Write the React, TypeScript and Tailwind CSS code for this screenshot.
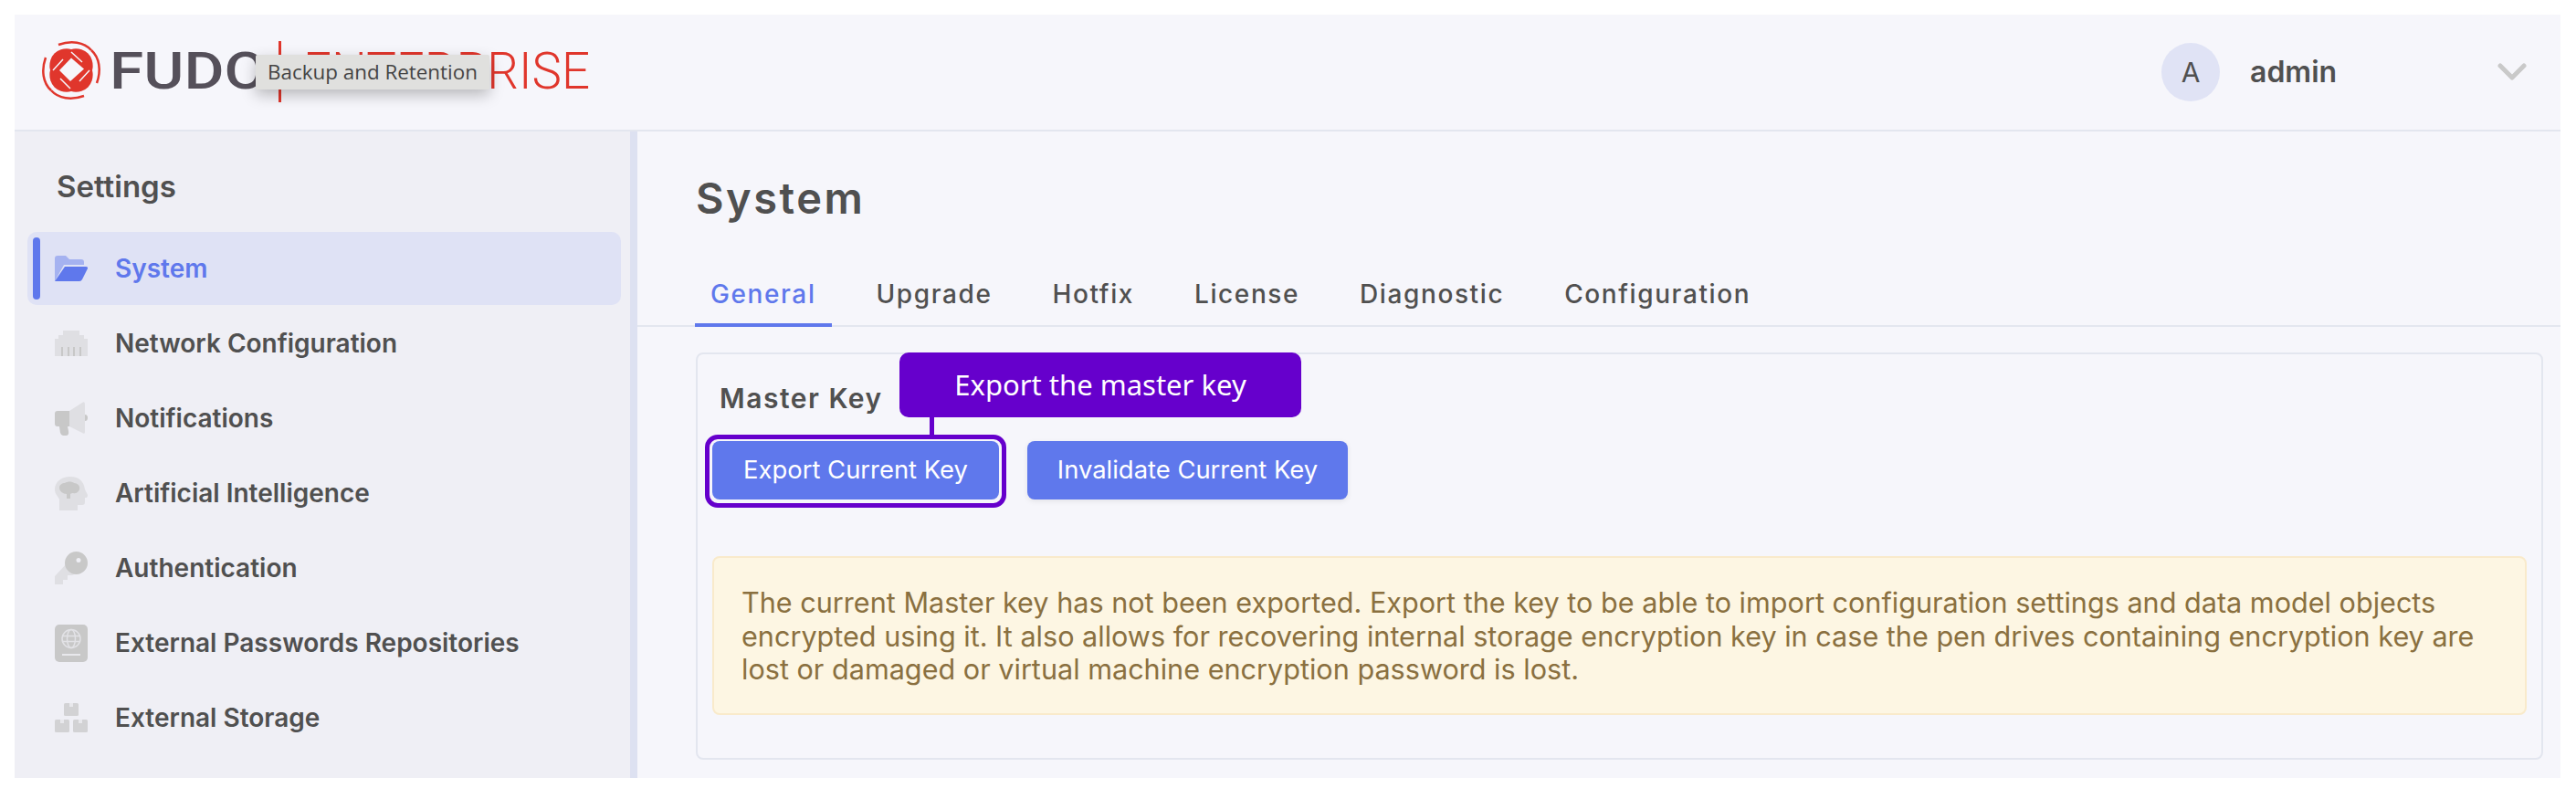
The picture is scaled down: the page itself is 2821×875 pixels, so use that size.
const navItems = [
  { label: 'System', icon: FolderIcon, active: true },
  { label: 'Network Configuration', icon: NetworkIcon },
  { label: 'Notifications', icon: MegaphoneIcon },
  { label: 'Artificial Intelligence', icon: BrainIcon },
  { label: 'Authentication', icon: KeyIcon },
  { label: 'External Passwords Repositories', icon: PassportIcon },
  { label: 'External Storage', icon: BoxesIcon },
]

const tabs = ['General', 'Upgrade', 'Hotfix', 'License', 'Diagnostic', 'Configuration']

function FolderIcon() {
  return (
    <svg viewBox="0 0 36 28" className="h-[28px] w-[36px]">
      <path d="M0 3a3 3 0 0 1 3-3h9l4 4h13a3 3 0 0 1 3 3v3H10L0 28z" fill="#5f78ec" opacity="0.45" />
      <path d="M11 12h23q2.500 0 2 2l-6 12q-1 2-3 2H0z" fill="#5f78ec" />
    </svg>
  )
}

function NetworkIcon() {
  return (
    <svg viewBox="0 0 36 28" className="h-[28px] w-[36px]">
      <path d="M9 0h18v5h5v4h4v19H0V9h4V5h5z" fill="#dfdfe3" />
      <path d="M7 18h2v10H7zM14 18h2v10h-2zM20 18h2v10h-2zM27 18h2v10h-2z" fill="#c8c8c8" />
    </svg>
  )
}

function MegaphoneIcon() {
  return (
    <svg viewBox="0 0 36 37" className="h-[37px] w-[36px]">
      <path d="M16 10 30 1q3-2 3 2v30q0 3-3 1L16 27z" fill="#dfdfe3" />
      <path d="M33 14q3 0 3 3.500T33 21z" fill="#c8c8c8" />
      <path d="M3 10h13v17h-2l1 5q1 5-3 5H9q-2 0-3-3l-1-7H3q-3 0-3-3V13q0-3 3-3z" fill="#c8c8c8" />
    </svg>
  )
}

function BrainIcon() {
  return (
    <svg viewBox="0 0 36 37" className="h-[37px] w-[36px]">
      <path d="M17 0C7 0 0 6 0 14c0 5 4 8 5 11v12h20v-6h5q3 0 3-3v-5h2q1-1 1-3l-3-6C32 6 27 0 17 0z" fill="#dfdfe3" />
      <path d="M5 12c0-3 3-5 6-5 3-2 8-2 10 0 4 0 7 3 6 7-1 3-4 5-7 4-1 0-2 0-3 1v5h-4v-5c-4 0-8-3-8-7z" fill="#c8c8c8" />
    </svg>
  )
}

function KeyIcon() {
  return (
    <svg viewBox="0 0 36 36" className="h-[36px] w-[36px]">
      <path d="M15 11 0 27v9h9v-5h5v-5h5l4-2z" fill="#dfdfe3" />
      <path fillRule="evenodd" d="M23.500 0a12.500 12.500 0 1 1 0 25 12.500 12.500 0 0 1 0-25zm2.500 7a2.500 2.500 0 1 0 0 5 2.500 2.500 0 0 0 0-5z" fill="#c8c8c8" />
    </svg>
  )
}

function PassportIcon() {
  return (
    <svg viewBox="0 0 36 41" className="h-[41px] w-[36px]">
      <rect width="36" height="41" rx="5" fill="#c8c8c8" />
      <g fill="none" stroke="#e2e2e6" strokeWidth="1.5">
        <circle cx="18" cy="15.500" r="10" />
        <ellipse cx="18" cy="15.500" rx="4.500" ry="10" />
        <path d="M8.500 12.500h19M8.500 18.500h19" />
      </g>
      <rect x="8" y="32" width="20" height="2" fill="#e8e8ec" />
    </svg>
  )
}

function BoxesIcon() {
  return (
    <svg viewBox="0 0 36 32" className="h-[32px] w-[36px]">
      <rect x="10" width="16" height="14" rx="1.500" fill="#d2d2d4" />
      <rect y="18" width="16" height="14" rx="1.500" fill="#d2d2d4" />
      <rect x="20" y="18" width="16" height="14" rx="1.500" fill="#d2d2d4" />
      <path d="M16 0h4v4h-4zM6 18h4v4H6zM26 18h4v4h-4z" fill="#e8e8ec" />
    </svg>
  )
}

function FudoLogo() {
  return (
    <svg viewBox="0 -1 610 70" className="h-[70px] w-[610px]">
      <g fill="#e0362c">
        <ellipse cx="32" cy="32" rx="26" ry="21" transform="rotate(-45 32 32)" />
        <ellipse cx="32" cy="32" rx="26" ry="21" transform="rotate(45 32 32)" />
      </g>
      <g fill="none" stroke="#e0362c" strokeWidth="2.500">
        <path d="M4 18C-1 32 1 46 10 54" />
        <path d="M60 46C65 32 63 18 54 10" />
        <path d="M18 4C32-1 46 1 54 10" />
        <path d="M46 60C32 65 18 63 10 54" />
      </g>
      <path d="M32 18.500 46 30.500 31 44 19 32z" fill="#f6f6fb" />
      <path d="M32 12 44 23 M12 32 23 20 M52 32 41 44 M31 52 20 41" fill="none" stroke="#f6f6fb" strokeWidth="1.500" />
      <text x="74" y="52" textLength="172" lengthAdjust="spacingAndGlyphs" fontFamily="Roboto, sans-serif" fontWeight="500" fontSize="56" fill="#55505a">FUDO</text>
      <rect x="259" y="0" width="3" height="67" fill="#e0362c" />
      <text x="286" y="52" textLength="314" lengthAdjust="spacingAndGlyphs" fontFamily="Roboto, sans-serif" fontWeight="300" fontSize="56" fill="#e0362c">ENTERPRISE</text>
    </svg>
  )
}

export default function App() {
  return (
    <div className="h-[875px] w-full overflow-hidden bg-white pt-4 pr-[17px] pl-4 font-['Inter',sans-serif] text-[#505050]">
      <div className="flex h-[836px] flex-col bg-[#f6f6fb]">
        <header className="relative flex h-[128px] shrink-0 items-center border-b-2 border-[#e3e6ef] pl-[30px]">
          <FudoLogo />
          <div className="absolute top-[44px] left-[264px] flex h-[38px] w-[256px] items-center justify-center rounded-[2px] bg-[#e0e0de] font-['Open_Sans',sans-serif] text-[22.400px] text-[#444] shadow-[0_6px_16px_rgba(0,0,0,0.25)]">
            Backup and Retention
          </div>
          <div className="ml-auto flex items-center">
            <div className="flex h-16 w-16 items-center justify-center rounded-full bg-[#e0e3f5] text-[30px]">A</div>
            <span className="ml-[33px] w-[271px] text-[32px] font-semibold">admin</span>
            <svg viewBox="0 0 32 20" className="mr-[37px] h-5 w-8">
              <path d="M3 3l13 13L29 3" fill="none" stroke="#c9c9c9" strokeWidth="5" strokeLinecap="round" strokeLinejoin="round" />
            </svg>
          </div>
        </header>

        <div className="flex min-h-0 flex-1">
          <aside className="w-[682px] shrink-0 border-r-[8px] border-[#dde1f1] bg-[#efeff5] pt-[42px] pr-[10px] pl-[14px]">
            <h2 className="pl-[32px] text-[33px] leading-[36px] font-semibold">Settings</h2>
            <nav className="mt-[32px] flex flex-col gap-[2px]">
              {navItems.map((item) => (
                <div
                  key={item.label}
                  className={`relative flex h-[80px] items-center rounded-[10px] text-[28px] font-semibold ${
                    item.active ? 'bg-[#dfe2f5] text-[#5f78ec]' : ''
                  }`}
                >
                  {item.active && (
                    <span className="absolute top-[6px] bottom-[6px] left-[6px] w-[8px] rounded bg-[#5f78ec]" />
                  )}
                  <span className="ml-[30px] flex w-[36px] justify-center">
                    <item.icon />
                  </span>
                  <span className="ml-[30px]">{item.label}</span>
                </div>
              ))}
            </nav>
          </aside>

          <main className="min-w-0 flex-1 pt-[45px]">
            <h1 className="pl-[64px] text-[47px] leading-[56px] font-semibold tracking-[2.500px]">System</h1>
            <div className="mt-[52px] flex gap-[32px] border-b-2 border-[#e3e6ef] pl-[63px]">
              {tabs.map((tab, i) => (
                <div
                  key={tab}
                  className={`-mb-[2px] h-[61px] px-[17px] pt-[8px] text-[28px] leading-[34px] font-medium tracking-[1.600px] ${
                    i === 0 ? 'border-b-4 border-[#5f78ec] text-[#5f78ec]' : ''
                  }`}
                >
                  {tab}
                </div>
              ))}
            </div>

            <div className="mt-[28px] mr-[19px] ml-[64px] h-[446px] rounded-[8px] border-2 border-[#e3e6ef] px-[16px] pt-[30px]">
              <div className="relative">
                <h3 className="pl-[8px] text-[30px] leading-[36px] font-semibold tracking-[1.500px]">Master Key</h3>
                <div className="absolute -top-[32px] left-[205px] flex h-[71px] w-[440px] items-center justify-center rounded-[10px] bg-[#6600cc] font-['Noto_Sans',sans-serif] text-[31px] text-white">
                  Export the master key
                  <span className="absolute top-[71px] left-[33px] h-[19px] w-[5px] bg-[#6600cc]" />
                </div>

                <div className="mt-[29px] flex gap-[31px]">
                  <div className="relative">
                    <button className="h-[64px] w-[314px] rounded-[8px] bg-[#5f78ec] text-[27.400px] text-white">Export Current Key</button>
                    <span className="absolute -top-[7px] -right-[8px] -bottom-[9px] -left-[8px] rounded-[14px] border-[5px] border-[#6600cc]" />
                  </div>
                  <button className="h-[64px] w-[351px] rounded-[8px] bg-[#5f78ec] text-[27.400px] text-white shadow-[0_2px_6px_rgba(0,0,0,0.08)]">Invalidate Current Key</button>
                </div>

                <div className="mt-[62px] h-[174px] rounded-[8px] border-2 border-[#f9eacb] bg-[#fdf6e3] pt-[31px] pr-[45px] pl-[30px] text-[30.600px] leading-[36.500px] text-[#8a7040]">
                  The current Master key has not been exported. Export the key to be able to import configuration settings and data model objects encrypted using it. It also allows for recovering internal storage encryption key in case the pen drives containing encryption key are lost or damaged or virtual machine encryption password is lost.
                </div>
              </div>
            </div>
          </main>
        </div>
      </div>
    </div>
  )
}
